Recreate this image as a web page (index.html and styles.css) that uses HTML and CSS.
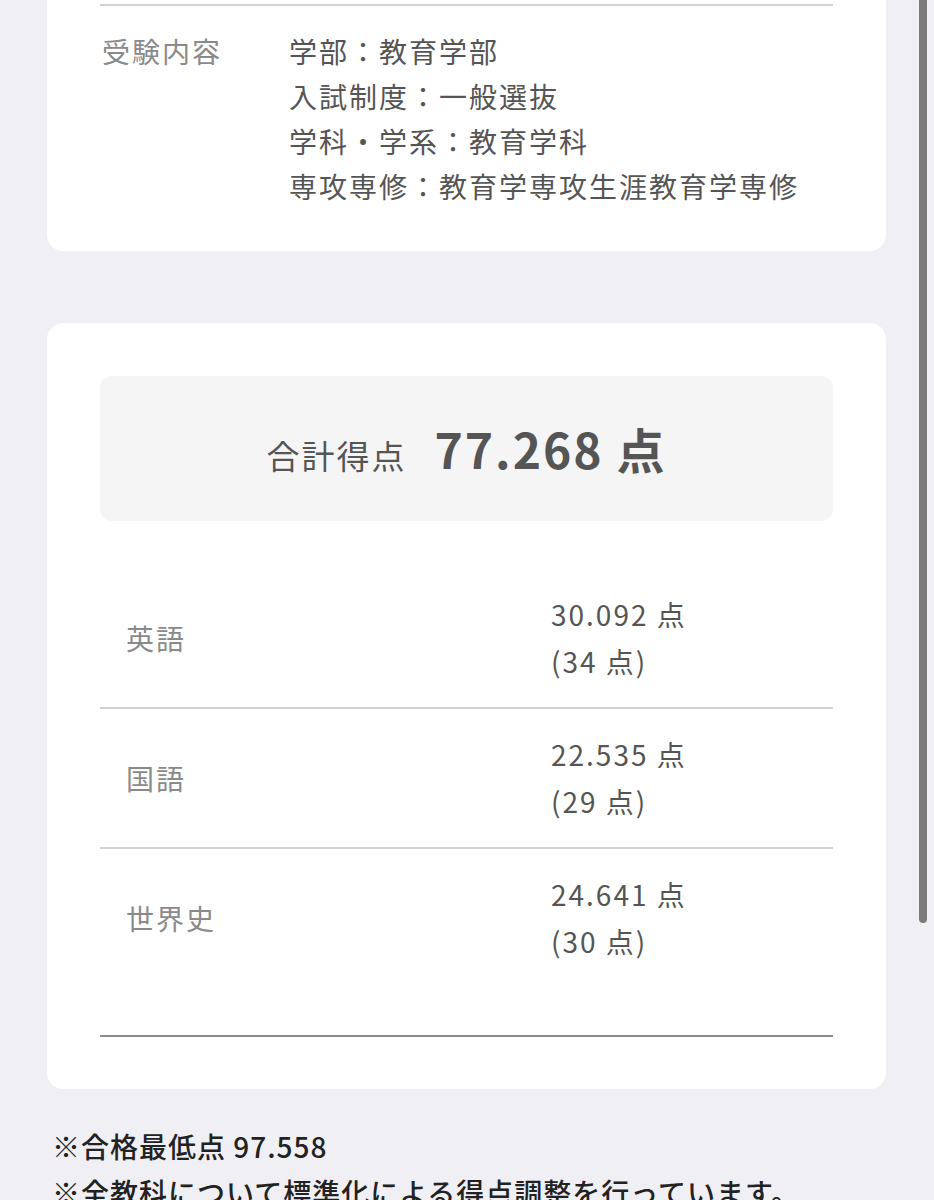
FILE: index.html
```html
<!DOCTYPE html>
<html lang="ja">
<head>
    <meta charset="UTF-8">
    <meta name="viewport" content="width=device-width, initial-scale=1.0">
    <title>得点開示</title>
    <link rel="stylesheet" href="styles.css">
</head>
<body>
    <div class="page">
        <section class="card card-info">
            <hr class="rule">
            <div class="info">
                <div class="info-label">受験内容</div>
                <div class="info-value">
                    学部：教育学部<br>
                    入試制度：一般選抜<br>
                    学科・学系：教育学科<br>
                    専攻専修：教育学専攻生涯教育学専修
                </div>
            </div>
        </section>

        <section class="card card-score">
            <div class="total">
                <span class="total-label">合計得点</span>
                <span class="total-value">77.268 点</span>
            </div>
            <div class="scores">
                <div class="score-row">
                    <div class="subject">英語</div>
                    <div class="points">30.092 点<br>(34 点)</div>
                </div>
                <div class="score-row">
                    <div class="subject">国語</div>
                    <div class="points">22.535 点<br>(29 点)</div>
                </div>
                <div class="score-row">
                    <div class="subject">世界史</div>
                    <div class="points">24.641 点<br>(30 点)</div>
                </div>
            </div>
            <div class="scores-end"></div>
        </section>

        <div class="notes">
            <p>※合格最低点 97.558</p>
            <p>※全教科について標準化による得点調整を行っています。</p>
        </div>
    </div>

    <div class="scrollbar"></div>
</body>
</html>
```

FILE: styles.css
```css
body {
    margin: 0;
    background-color: #efeff4;
    font-family: "Noto Sans CJK JP", "Noto Sans", sans-serif;
    color: #555;
}
.page {
    padding: 0 48px 0 47px;
}
.card {
    background-color: #fff;
    border-radius: 16px;
    padding: 0 53px;
}
.card-info {
    border-radius: 0 0 16px 16px;
    padding-top: 4px;
    padding-bottom: 42px;
}
.rule {
    margin: 0;
    border: none;
    height: 2px;
    background-color: #d2d2d2;
}
.info {
    display: grid;
    grid-template-columns: 189px 1fr;
    margin-top: 23px;
    font-size: 28px;
    line-height: 45px;
    letter-spacing: 2px;
}
.info-label {
    color: #8a8a8a;
    padding-left: 2px;
}
.info-value {
    color: #555;
}

.card-score {
    margin-top: 72px;
    padding-top: 53px;
    padding-bottom: 52px;
}
.total {
    height: 145px;
    background-color: #f5f5f5;
    border-radius: 12px;
    display: flex;
    align-items: baseline;
    justify-content: center;
    line-height: 145px;
    color: #555;
}
.total-label {
    font-size: 33px;
    letter-spacing: 2px;
    margin-right: 28px;
}
.total-value {
    font-size: 48px;
    font-weight: 700;
    letter-spacing: 2px;
}
.scores {
    margin-top: 48px;
}
.score-row {
    display: grid;
    grid-template-columns: 451px 1fr;
    align-items: center;
    height: 140px;
    box-sizing: border-box;
    border-bottom: 2px solid #d2d2d2;
    font-size: 28px;
    letter-spacing: 2px;
}
.score-row:last-child {
    border-bottom-color: transparent;
}
.subject {
    color: #8a8a8a;
    padding-left: 26px;
}
.points {
    line-height: 47px;
    color: #555;
}
.scores-end {
    margin-top: 46px;
    height: 2px;
    background-color: #8c8c8c;
}

.notes {
    margin-top: 34px;
    padding-left: 5px;
    font-size: 28px;
    line-height: 46px;
    letter-spacing: 1px;
    color: #222;
    font-weight: 500;
}
.notes p {
    margin: 0;
    white-space: nowrap;
}

.scrollbar {
    position: fixed;
    top: 0;
    right: 7px;
    width: 8px;
    height: 923px;
    background-color: #7b7b7b;
    border-radius: 0 0 4px 4px;
}
```
